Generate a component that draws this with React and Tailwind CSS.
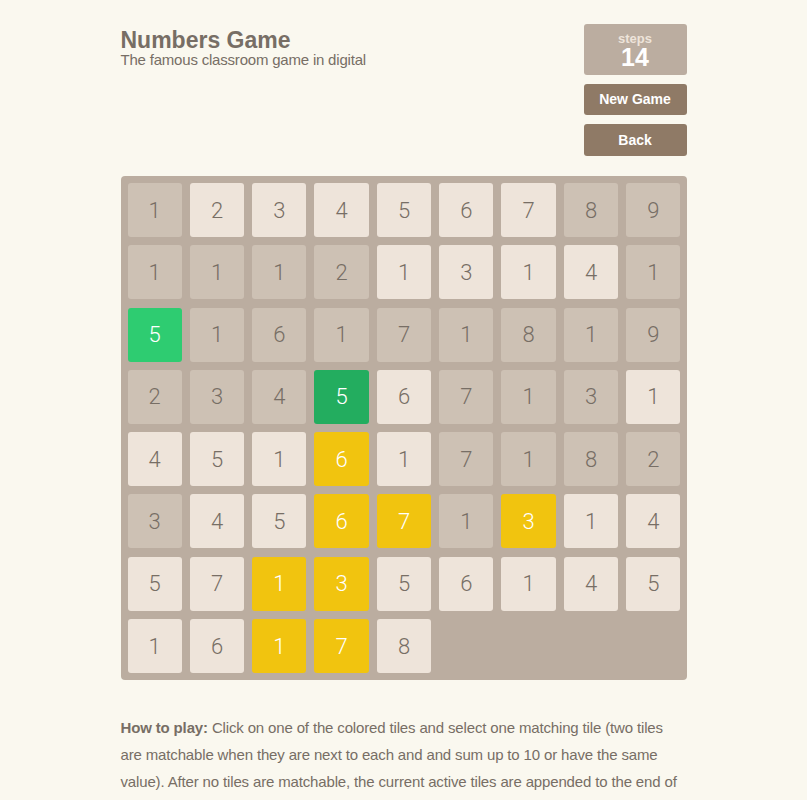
const rows = [
  ["1d", "2l", "3l", "4l", "5l", "6l", "7l", "8d", "9d"],
  ["1d", "1d", "1d", "2d", "1l", "3l", "1l", "4l", "1d"],
  ["5g", "1d", "6d", "1d", "7d", "1d", "8d", "1d", "9d"],
  ["2d", "3d", "4d", "5G", "6l", "7d", "1d", "3d", "1l"],
  ["4l", "5l", "1l", "6y", "1l", "7d", "1d", "8d", "2d"],
  ["3d", "4l", "5l", "6y", "7y", "1d", "3y", "1l", "4l"],
  ["5l", "7l", "1y", "3y", "5l", "6l", "1l", "4l", "5l"],
  ["1l", "6l", "1y", "7y", "8l"],
];

const tileClass = {
  d: "bg-[#cdc1b4] text-[#776e65]",
  l: "bg-[#eee4da] text-[#776e65]",
  g: "bg-[#2ecc71] text-white",
  G: "bg-[#23ad5f] text-white",
  y: "bg-[#f1c40f] text-white",
};

function Tile({ value, kind }) {
  return (
    <div
      className={`h-[54px] rounded-[3px] flex items-center justify-center text-[22px] font-light ${tileClass[kind]}`}
      style={{ fontFamily: "Roboto, 'Liberation Sans', sans-serif" }}
    >
      {value}
    </div>
  );
}

export default function App() {
  const tiles = rows.flat();
  return (
    <div className="min-h-screen bg-[#faf8ef] text-[#776e65]" style={{ fontFamily: "'Liberation Sans', Arial, sans-serif" }}>
      <div className="w-[566px] mx-auto pt-[24px]">
        <div className="flex justify-between">
          <div className="pt-[4px]">
            <h1 className="text-[23px] font-bold leading-[24px]">Numbers Game</h1>
            <p className="text-[15px] leading-[16px] tracking-[-0.2px]">The famous classroom game in digital</p>
          </div>
          <div className="w-[103px] flex flex-col gap-[9px]">
            <div className="h-[51px] bg-[#bbada0] rounded-[3px] flex flex-col items-center justify-center pt-[1px]">
              <div className="text-[13px] font-bold text-[#eee4da] leading-[13px]">steps</div>
              <div className="text-[25px] font-bold text-white leading-[24px]">14</div>
            </div>
            <button className="h-[31px] bg-[#8f7a66] rounded-[3px] text-white font-bold text-[14px]">New Game</button>
            <button className="h-[32px] bg-[#8f7a66] rounded-[3px] text-white font-bold text-[14px]">Back</button>
          </div>
        </div>

        <div className="mt-[20px] bg-[#bbada0] rounded-[4px] pt-[7px] pl-[7px] pr-[6px] grid grid-cols-9 gap-x-[8px] gap-y-[8.3px] h-[504px] content-start">
          {tiles.map((t, i) => (
            <Tile key={i} value={t[0]} kind={t[1]} />
          ))}
        </div>

        <p className="mt-[34px] text-[15px] leading-[27px] tracking-[-0.15px]">
          <b>How to play:</b> Click on one of the colored tiles and select one matching tile (two tiles are matchable when they are next to each and and sum up to 10 or have the same value). After no tiles are matchable, the current active tiles are appended to the end of the field. The goal is to clear the whole field.
        </p>
      </div>
    </div>
  );
}
